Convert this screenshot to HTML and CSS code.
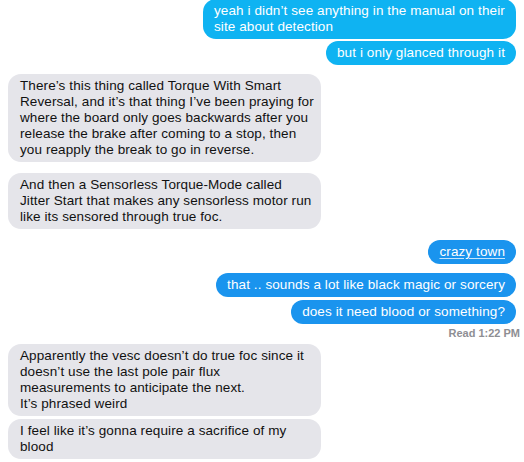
FILE: index.html
```html
<!DOCTYPE html>
<html>
<head>
<meta charset="utf-8">
<link rel="stylesheet" href="styles.css">
</head>
<body>
<div class="thread">
  <div class="msg me light first">yeah i didn’t see anything in the manual on their site about detection</div>
  <div class="msg me light tail s2">but i only glanced through it</div>
  <div class="msg them tail s9">There’s this thing called Torque With Smart Reversal, and it’s that thing I’ve been praying for where the board only goes backwards after you release the brake after coming to a stop, then you reapply the break to go in reverse.</div>
  <div class="msg them tail s11">And then a Sensorless Torque-Mode called Jitter Start that makes any sensorless motor run like its sensored through true foc.</div>
  <div class="msg me tail s11"><span class="link">crazy town</span></div>
  <div class="msg me s9">that .. sounds a lot like black magic or sorcery</div>
  <div class="msg me tail s3">does it need blood or something?</div>
  <div class="receipt">Read 1:22 PM</div>
  <div class="msg them s4">Apparently the vesc doesn’t do true foc since it doesn’t use the last pole pair flux measurements to anticipate the next.<br>It’s phrased weird</div>
  <div class="msg them tail s3">I feel like it’s gonna require a sacrifice of my blood</div>
</div>
</body>
</html>
```

FILE: styles.css
```css
html, body {
  margin: 0;
  background: #ffffff;
}

body {
  font-family: "Liberation Sans", Arial, sans-serif;
  font-size: 13.5px;
  letter-spacing: 0.1px;
  line-height: 16px;
  color: #111111;
  overflow: hidden;
  height: 462px;
}

.thread {
  display: flex;
  flex-direction: column;
  padding: 0 8px;
  margin-top: -1px;
}

.msg {
  position: relative;
  max-width: 313px;
  box-sizing: border-box;
  border-radius: 13px;
  padding: 4px 11px;
}

.me {
  align-self: flex-end;
  background: #1a94ee;
  color: #ffffff;
  --bubble: #1a94ee;
}

.me.light {
  background: #0fb3f2;
  --bubble: #0fb3f2;
}

.them {
  align-self: flex-start;
  background: #e5e5ea;
  color: #111111;
  padding: 4px 7px 4px 12px;
  --bubble: #e5e5ea;
}

.s2 { margin-top: 2px; }
.s3 { margin-top: 3px; }
.s4 { margin-top: 4px; }
.s9 { margin-top: 9px; }
.s11 { margin-top: 11px; }

.tail::before,
.tail::after {
  content: "";
  position: absolute;
  bottom: 0;
  z-index: -1;
  height: 16px;
}

.me.tail::before {
  right: -6px;
  width: 20px;
  background: var(--bubble);
  border-bottom-left-radius: 16px 14px;
}

.me.tail::after {
  right: -12px;
  width: 12px;
  background: #ffffff;
  border-bottom-left-radius: 9px;
}

.them.tail::before {
  left: -6px;
  width: 20px;
  background: var(--bubble);
  border-bottom-right-radius: 16px 14px;
}

.them.tail::after {
  left: -12px;
  width: 12px;
  background: #ffffff;
  border-bottom-right-radius: 9px;
}

.link {
  text-decoration: underline;
  text-decoration-color: rgba(255, 255, 255, 0.75);
  text-underline-offset: 2px;
}

.receipt {
  align-self: flex-end;
  margin-right: -4px;
  margin-top: 2px;
  font-size: 11px;
  letter-spacing: 0;
  line-height: 14px;
  font-weight: bold;
  color: #8e8e93;
}
```
